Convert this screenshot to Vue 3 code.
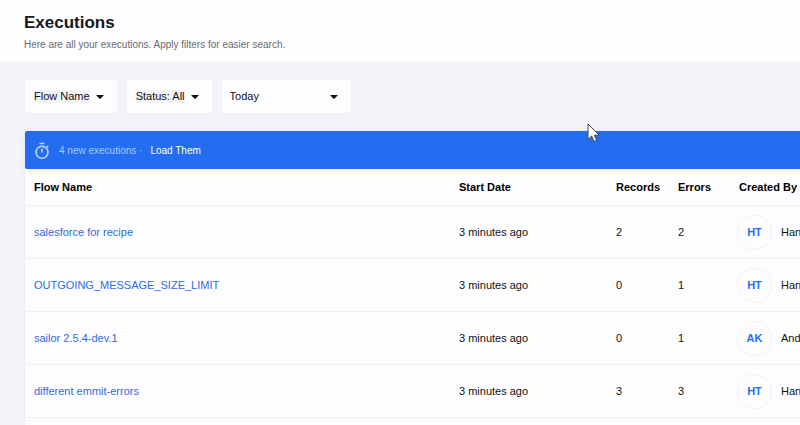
<script setup>
import { ref } from 'vue'

const period = ref('Today')

const executions = [
  { id: 1, flow: 'salesforce for recipe', start: '3 minutes ago', records: 2, errors: 2, initials: 'HT', user: 'Han' },
  { id: 2, flow: 'OUTGOING_MESSAGE_SIZE_LIMIT', start: '3 minutes ago', records: 0, errors: 1, initials: 'HT', user: 'Han' },
  { id: 3, flow: 'sailor 2.5.4-dev.1', start: '3 minutes ago', records: 0, errors: 1, initials: 'AK', user: 'And' },
  { id: 4, flow: 'different emmit-errors', start: '3 minutes ago', records: 3, errors: 3, initials: 'HT', user: 'Han' },
]
</script>

<template>
  <div class="page">
    <header class="page-header">
      <h1>Executions</h1>
      <p>Here are all your executions. Apply filters for easier search.</p>
    </header>

    <main class="content">
      <div class="filters">
        <button type="button" class="filter">
          <span class="filter-text">Flow Name</span>
          <svg class="caret" viewBox="0 0 8 4" aria-hidden="true"><path d="M.6 0h6.8q.6.1.2.6L4.4 3.8q-.4.3-.8 0L.4.6Q0 .1.6 0z" /></svg>
        </button>
        <button type="button" class="filter">
          <span class="filter-text">Status: All</span>
          <svg class="caret" viewBox="0 0 8 4" aria-hidden="true"><path d="M.6 0h6.8q.6.1.2.6L4.4 3.8q-.4.3-.8 0L.4.6Q0 .1.6 0z" /></svg>
        </button>
        <div class="period">
          <select v-model="period" aria-label="Period">
            <option>Today</option>
          </select>
          <svg class="caret" viewBox="0 0 8 4" aria-hidden="true"><path d="M.6 0h6.8q.6.1.2.6L4.4 3.8q-.4.3-.8 0L.4.6Q0 .1.6 0z" /></svg>
        </div>
      </div>

      <section class="card">
        <div class="notice">
          <svg class="timer" viewBox="0 0 16 18" aria-hidden="true">
            <path d="M5.5 1.5h5M8 6.5v4M12.8 5.2l1.3-1.3" />
            <circle cx="8" cy="10.3" r="6" />
          </svg>
          <span class="notice-text">4 new executions ·</span>
          <a href="#load">Load Them</a>
        </div>

        <table>
          <colgroup>
            <col />
            <col class="col-start" />
            <col class="col-records" />
            <col class="col-errors" />
            <col class="col-user" />
          </colgroup>
          <thead>
            <tr>
              <th scope="col">Flow Name</th>
              <th scope="col">Start Date</th>
              <th scope="col">Records</th>
              <th scope="col">Errors</th>
              <th scope="col">Created By</th>
            </tr>
          </thead>
          <tbody>
            <tr v-for="item in executions" :key="item.id">
              <td><a href="#flow">{{ item.flow }}</a></td>
              <td>{{ item.start }}</td>
              <td>{{ item.records }}</td>
              <td>{{ item.errors }}</td>
              <td class="user-cell">
                <div class="user">
                  <span class="avatar">{{ item.initials }}</span>
                  <span>{{ item.user }}</span>
                </div>
              </td>
            </tr>
          </tbody>
        </table>
      </section>
    </main>

    <svg class="pointer" viewBox="0 0 13 20" aria-hidden="true">
      <path d="M1 1v15.4l3.6-3.4 2.5 5.4 2.6-1.1-2.4-5.1h4.9z" />
    </svg>
  </div>
</template>

<style>
body {
  margin: 0;
}
</style>

<style scoped>
.page {
  position: relative;
  display: flex;
  flex-direction: column;
  box-sizing: border-box;
  min-height: 100vh;
  overflow: hidden;
  background: #f3f4f8;
  color: #111;
  font-family: "Liberation Sans", Arial, sans-serif;
  font-size: 11px;
  line-height: 16px;
}

.page-header {
  padding: 12px 24px 9px;
  background: #fdfdff;
}

h1 {
  margin: 0;
  color: #16181c;
  font-size: 17px;
  line-height: 22px;
}

.page-header p {
  margin: 3px 0 0;
  color: #6b6b6f;
  font-size: 10px;
}

.content {
  display: flex;
  flex: 1;
  flex-direction: column;
  padding: 18px 0 0 25px;
}

.filters {
  display: flex;
  gap: 10px;
  margin-bottom: 18px;
}

.filter,
.period {
  box-sizing: border-box;
  height: 33px;
  border: 0;
  border-radius: 1px;
  background: #fdfdff;
  box-shadow: 0 0 1px #dcdce2;
  color: #111;
  font: inherit;
}

.filter {
  display: flex;
  align-items: center;
  gap: 6px;
  padding: 0 13px 0 9px;
}

.filter-text {
  background: #f3f3f4;
  line-height: 13px;
}

.caret {
  width: 8px;
  height: 4px;
  fill: #111;
}

.period {
  display: grid;
  align-items: center;
  width: 129px;
}

.period > * {
  grid-area: 1 / 1;
}

.period select {
  width: 100%;
  height: 100%;
  padding: 0 8px 1px;
  border: 0;
  appearance: none;
  background: transparent;
  color: inherit;
  font: inherit;
}

.period .caret {
  justify-self: end;
  margin-right: 13px;
  pointer-events: none;
}

.card {
  flex: 1;
  border-radius: 2px 0 0;
  background: #fdfdff;
  box-shadow: 0 0 3px #e2e3e9;
}

.notice {
  display: flex;
  align-items: center;
  box-sizing: border-box;
  height: 38px;
  padding: 1px 9px 0;
  border-radius: 2px 0 0 2px;
  background: #246df0;
  box-shadow: 0 2px 6px #ececf2;
  font-size: 10px;
}

.timer {
  width: 16px;
  height: 18px;
  margin-right: 9px;
  fill: none;
  stroke: #c5d9fc;
  stroke-width: 1.5;
}

.notice-text {
  margin-right: 8px;
  color: #a9c7fb;
}

.notice a {
  color: #fff;
  text-decoration: none;
}

table {
  width: 100%;
  border-collapse: separate;
  border-spacing: 0;
  table-layout: fixed;
}

.col-start {
  width: 157px;
}

.col-records {
  width: 62px;
}

.col-errors {
  width: 61px;
}

.col-user {
  width: 70px;
}

th,
td {
  box-sizing: border-box;
  padding: 0 0 0 9px;
  border-bottom: 1px solid #f1f1f5;
  text-align: left;
  white-space: nowrap;
}

th {
  height: 37px;
  color: #000;
}

td {
  height: 53px;
}

td a {
  color: #2d6be0;
  text-decoration: none;
}

.user-cell {
  padding-left: 7px;
}

.user {
  display: flex;
  align-items: center;
  gap: 9px;
}

.avatar {
  display: flex;
  flex: none;
  align-items: center;
  justify-content: center;
  box-sizing: border-box;
  width: 35px;
  height: 35px;
  border: 1px solid #f2f2f5;
  border-radius: 50%;
  color: #246df0;
  font-weight: bold;
}

.pointer {
  position: absolute;
  top: 123px;
  left: 587px;
  width: 13px;
  height: 20px;
  fill: #fff;
  stroke: #45484e;
  stroke-width: 1;
}
</style>
